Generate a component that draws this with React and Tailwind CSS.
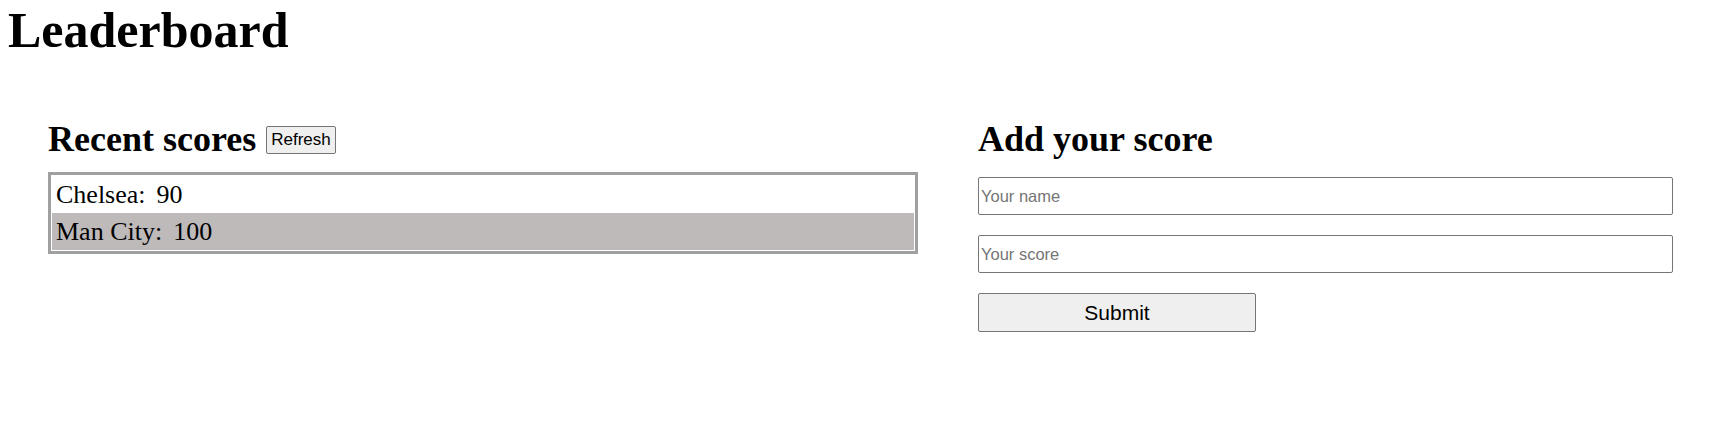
import React from 'react';

const scores = [
  { id: 1, name: 'Chelsea', score: 90 },
  { id: 2, name: 'Man City', score: 100 },
];

const ScoreList = ({ items = [] }) => (
  <div className="mt-[15px] border-[3px] border-[#a0a0a0] p-px">
    {items.map((item, i) => (
      <div
        key={item.id}
        className={`flex h-[37px] items-center gap-[11px] pl-[4px] text-[26px] leading-[37px] text-black ${
          i % 2 === 1 ? 'bg-[#bebaba]' : 'bg-white'
        }`}
      >
        <span>{item.name}:</span>
        <span>{item.score}</span>
      </div>
    ))}
  </div>
);

export default function App() {
  return (
    <div className="min-h-[432px] bg-white font-['Liberation_Serif',serif] text-black">
      <h1 className="pl-2 pt-[5px] text-[50px] font-bold leading-[50px]">Leaderboard</h1>

      <div className="mt-[67px] flex items-start gap-[60px] pl-[48px]">
        {/* recent scores */}
        <div className="w-[870px]">
          <div className="flex h-[35px] items-center gap-[10px]">
            <h2 className="text-[36px] font-bold leading-[35px]">Recent scores</h2>
            <button
              type="button"
              className="h-[28px] rounded-[2px] border border-[#767676] bg-[#efefef] px-[4px] font-['Liberation_Sans',sans-serif] text-[17px] leading-[20px] text-black"
            >
              Refresh
            </button>
          </div>
          <ScoreList items={scores} />
        </div>

        {/* add score form */}
        <div className="w-[695px]">
          <h2 className="h-[35px] text-[36px] font-bold leading-[35px]">Add your score</h2>
          <form className="flex flex-col" onSubmit={(e) => e.preventDefault()}>
            <input
              type="text"
              placeholder="Your name"
              className="mt-[20px] h-[38px] w-full rounded-[2px] border border-[#767676] bg-white px-[2px] font-['Liberation_Sans',sans-serif] text-[16.5px] text-black placeholder:text-[#757575] outline-none"
            />
            <input
              type="text"
              placeholder="Your score"
              className="mt-[20px] h-[38px] w-full rounded-[2px] border border-[#767676] bg-white px-[2px] font-['Liberation_Sans',sans-serif] text-[16.5px] text-black placeholder:text-[#757575] outline-none"
            />
            <button
              type="submit"
              className="mt-[20px] h-[39px] w-[278px] rounded-[2px] border border-[#767676] bg-[#efefef] font-['Liberation_Sans',sans-serif] text-[21px] text-black"
            >
              Submit
            </button>
          </form>
        </div>
      </div>
    </div>
  );
}
